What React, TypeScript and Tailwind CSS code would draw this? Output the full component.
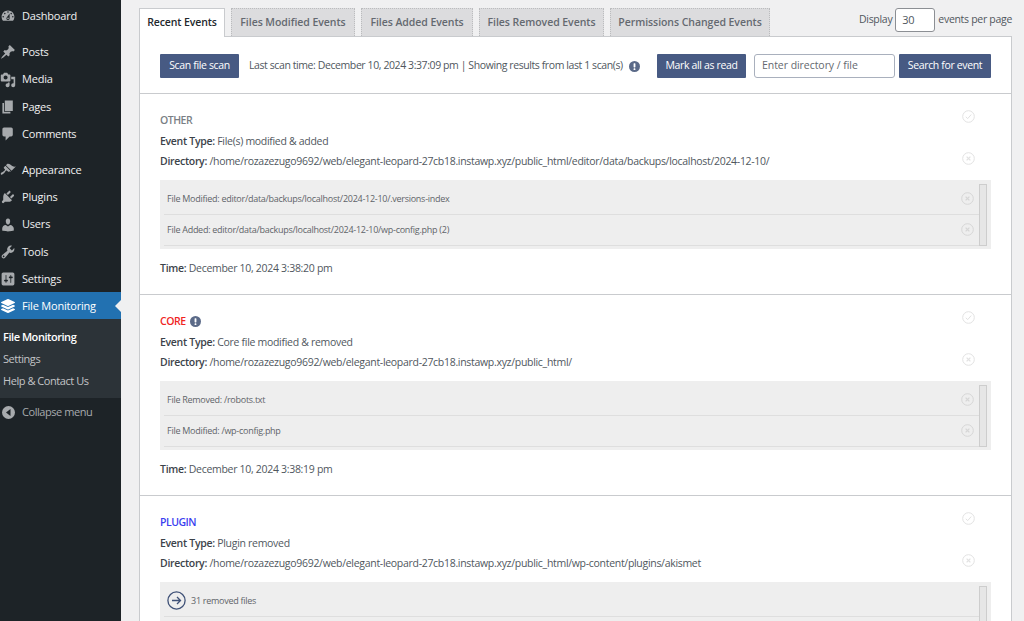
import React from "react";
import { FaLayerGroup } from "react-icons/fa";

const font = { fontFamily: '"Open Sans", "Noto Sans", sans-serif' };

type NavItem = { label: string; d: string; gap?: string };
const nav: NavItem[] = [
  { label: "Dashboard", d: "M3.76 16h12.48c1.1-1.37 1.76-3.11 1.76-5 0-4.42-3.58-8-8-8s-8 3.58-8 8c0 1.89.66 3.63 1.76 5zM10 4c.55 0 1 .45 1 1s-.45 1-1 1-1-.45-1-1 .45-1 1-1zM6 6c.55 0 1 .45 1 1s-.45 1-1 1-1-.45-1-1 .45-1 1-1zm8 0c.55 0 1 .45 1 1s-.45 1-1 1-1-.45-1-1 .45-1 1-1zm-5.37 5.55L12 7v6c0 1.1-.9 2-2 2s-2-.9-2-2c0-.57.24-1.08.63-1.45zM4 10c.55 0 1 .45 1 1s-.45 1-1 1-1-.45-1-1 .45-1 1-1zm12 0c.55 0 1 .45 1 1s-.45 1-1 1-1-.45-1-1 .45-1 1-1zm-5 3c0-.55-.45-1-1-1s-1 .45-1 1 .45 1 1 1 1-.45 1-1z" },
  { label: "Posts", gap: "mt-[8.6px]", d: "M10.44 3.02l1.82-1.82 6.36 6.35-1.83 1.82c-1.05-.68-2.48-.57-3.41.36l-.75.75c-.92.93-1.04 2.35-.35 3.41l-1.83 1.82-2.41-2.41-2.8 2.79c-.42.42-3.38 2.71-3.8 2.29s1.86-3.39 2.28-3.81l2.79-2.79L4.1 9.36l1.83-1.82c1.05.69 2.48.57 3.4-.36l.75-.75c.93-.92 1.05-2.35.36-3.41z" },
  { label: "Media", d: "M13 11V4c0-.55-.45-1-1-1h-1.67L9 1H5L3.67 3H2c-.55 0-1 .45-1 1v7c0 .55.45 1 1 1h10c.55 0 1-.45 1-1zM7 4.5c1.38 0 2.5 1.12 2.5 2.5S8.38 9.5 7 9.5 4.5 8.38 4.5 7 5.62 4.5 7 4.5zM14 6h5v10.5c0 1.38-1.12 2.5-2.5 2.5S14 17.88 14 16.5s1.12-2.5 2.5-2.5c.17 0 .34.02.5.05V9h-3V6zm-4 8.05V13h2v3.5c0 1.38-1.12 2.5-2.5 2.5S7 17.88 7 16.5 8.12 14 9.5 14c.17 0 .34.02.5.05z" },
  { label: "Pages", d: "M6 15V2h10v13H6zm-1 1h8v2H3V5h2v11z" },
  { label: "Comments", d: "M5 2h9c1.1 0 2 .9 2 2v7c0 1.1-.9 2-2 2h-2l-5 5v-5H5c-1.1 0-2-.9-2-2V4c0-1.1.9-2 2-2z" },
  { label: "Appearance", gap: "mt-[8.6px]", d: "M14.48 11.06L7.41 3.99l1.5-1.5c.5-.56 2.3-.47 3.51.32 1.21.8 1.43 1.28 2.91 2.1 1.18.64 2.45 1.26 4.45.85zm-.71.71L6.7 4.7 4.93 6.47c-.39.39-.39 1.02 0 1.41l1.06 1.06c.39.39.39 1.03 0 1.42-.6.6-1.43 1.11-2.21 1.69-.35.26-.7.53-1.01.84C1.43 13.23.4 14.79 1.2 15.6c.8.8 2.36-.23 3.7-1.57.31-.31.58-.66.85-1.02.57-.78 1.09-1.61 1.69-2.21.39-.39 1.02-.39 1.41 0l1.06 1.06c.39.39 1.02.39 1.41 0z" },
  { label: "Plugins", d: "M13.11 4.36L9.87 7.6 8 5.73l3.24-3.24c.35-.34 1.05-.2 1.56.32.52.51.66 1.21.31 1.55zm-8 1.77l.91-1.12 9.01 9.01-1.19.84c-.71.71-2.63 1.16-3.82 1.16H6.14L4.9 17.26c-.59.59-1.54.59-2.12 0-.59-.58-.59-1.53 0-2.12l1.24-1.24v-3.88c0-1.13.4-3.19 1.09-3.89zm7.26 3.97l3.24-3.24c.34-.35 1.04-.21 1.55.31.52.51.66 1.21.31 1.55l-3.24 3.25z" },
  { label: "Users", d: "M10 9.25c-2.27 0-2.73-3.44-2.73-3.44C7 4.02 7.82 2 9.97 2c2.16 0 2.98 2.02 2.71 3.81 0 0-.41 3.44-2.68 3.44zm0 2.57L12.72 10c2.39 0 4.52 2.33 4.52 4.53v2.49s-3.65 1.13-7.24 1.13c-3.65 0-7.24-1.13-7.24-1.13v-2.49c0-2.25 1.94-4.48 4.47-4.48z" },
  { label: "Tools", d: "M16.68 9.77c-1.34 1.34-3.3 1.67-4.95.99l-5.41 6.52c-.99.99-2.59.99-3.58 0s-.99-2.59 0-3.57l6.52-5.42c-.68-1.65-.35-3.61.99-4.95 1.28-1.28 3.12-1.62 4.72-1.06l-2.89 2.89 2.82 2.82 2.86-2.87c.53 1.58.18 3.39-1.08 4.65zM3.81 16.21c.4.39 1.04.39 1.43 0 .4-.4.4-1.04 0-1.43-.39-.4-1.03-.4-1.43 0-.39.39-.39 1.03 0 1.43z" },
  { label: "Settings", d: "M18 16V4c0-1.1-.9-2-2-2H4c-1.1 0-2 .9-2 2v12c0 1.1.9 2 2 2h12c1.1 0 2-.9 2-2zM8 11h1c.55 0 1 .45 1 1s-.45 1-1 1H8v1.5c0 .28-.22.5-.5.5s-.5-.22-.5-.5V13H6c-.55 0-1-.45-1-1s.45-1 1-1h1V5.5c0-.28.22-.5.5-.5s.5.22.5.5V11zm5-2h-1c-.55 0-1-.45-1-1s.45-1 1-1h1V5.5c0-.28.22-.5.5-.5s.5.22.5.5V7h1c.55 0 1 .45 1 1s-.45 1-1 1h-1v5.5c0 .28-.22.5-.5.5s-.5-.22-.5-.5V9z" },
];

function Sidebar() {
  return (
    <aside className="w-[121px] shrink-0 bg-[#1d2327] text-[11px] tracking-[-0.2px] text-[#f0f0f1]">
      <ul className="pt-[2.7px]">
        {nav.map(({ label, d, gap }) => (
          <li key={label} className={`flex h-[27.3px] items-center ${gap ?? ""}`}>
            <span className="flex w-[22px] justify-center pr-[6px]">
              <svg width="16" height="16" viewBox="0 0 20 20" fill="#a7aaad"><path d={d} /></svg>
            </span>
            <span>{label}</span>
          </li>
        ))}
        <li className="relative -mt-[0.6px] flex h-[27px] items-center bg-[#2271b1] text-white">
          <span className="flex w-[22px] justify-center pr-[7px]">
            <FaLayerGroup size={14} />
          </span>
          <span>File Monitoring</span>
          <span className="absolute right-0 top-[8px] h-0 w-0 border-y-[6px] border-r-[6px] border-y-transparent border-r-[#f0f0f1]" />
        </li>
      </ul>
      <ul className="flex h-[79px] flex-col justify-center gap-[5.5px] bg-[#2c3338] pl-[3px] tracking-[-0.45px] text-[#c3c4c7]">
        <li className="font-semibold text-white">File Monitoring</li>
        <li>Settings</li>
        <li>Help &amp; Contact Us</li>
      </ul>
      <div className="mt-[2px] flex h-[24px] items-center tracking-[-0.45px] text-[#a7aaad]">
        <span className="flex w-[22px] justify-center pr-[6px]">
          <svg width="13" height="13" viewBox="0 0 13 13">
            <circle cx="6.5" cy="6.5" r="6.5" fill="#a7aaad" />
            <path d="M8.5 3 L4 6.5 L8.5 10 Z" fill="#1d2327" />
          </svg>
        </span>
        <span>Collapse menu</span>
      </div>
    </aside>
  );
}

const Btn = ({ children, className = "" }: { children: React.ReactNode; className?: string }) => (
  <button className={`flex h-[24px] items-center justify-center rounded-[1px] bg-[#475a83] text-[10.5px] tracking-[-0.35px] text-white ${className}`}>
    {children}
  </button>
);

function Info({ size = 11 }: { size?: number }) {
  return (
    <svg width={size} height={size} viewBox="0 0 12 12" className="shrink-0">
      <circle cx="6" cy="6" r="6" fill="#5b6a88" />
      <rect x="5" y="2.4" width="2" height="4.6" rx="0.6" fill="#fff" />
      <rect x="5" y="8" width="2" height="1.8" rx="0.6" fill="#fff" />
    </svg>
  );
}

function CircleMark({ kind, box = false }: { kind: "check" | "x"; box?: boolean }) {
  const c = box ? "#d6d6d6" : "#e2e2e2";
  return (
    <svg width="13" height="13" viewBox="0 0 13 13">
      <circle cx="6.5" cy="6.5" r="5.8" fill="none" stroke={c} strokeWidth="1" />
      {kind === "check" ? (
        <path d="M3.8 6.8 L5.7 8.6 L9.2 4.6" fill="none" stroke={c} strokeWidth="1" />
      ) : (
        <path d="M4.6 4.6 L8.4 8.4 M8.4 4.6 L4.6 8.4" fill="none" stroke={c} strokeWidth="1.3" />
      )}
    </svg>
  );
}

type EventData = {
  title: string;
  titleClass: string;
  info?: boolean;
  type: string;
  dir: string;
  files?: string[];
  removed?: string;
  time?: string;
};

const events: EventData[] = [
  {
    title: "OTHER",
    titleClass: "text-[#7a7f85]",
    type: "File(s) modified & added",
    dir: "/home/rozazezugo9692/web/elegant-leopard-27cb18.instawp.xyz/public_html/editor/data/backups/localhost/2024-12-10/",
    files: ["File Modified: editor/data/backups/localhost/2024-12-10/.versions-index", "File Added: editor/data/backups/localhost/2024-12-10/wp-config.php (2)"],
    time: "December 10, 2024 3:38:20 pm",
  },
  {
    title: "CORE",
    titleClass: "text-[#f0261f]",
    info: true,
    type: "Core file modified & removed",
    dir: "/home/rozazezugo9692/web/elegant-leopard-27cb18.instawp.xyz/public_html/",
    files: ["File Removed: /robots.txt", "File Modified: /wp-config.php"],
    time: "December 10, 2024 3:38:19 pm",
  },
  {
    title: "PLUGIN",
    titleClass: "text-[#3a3ff0]",
    type: "Plugin removed",
    dir: "/home/rozazezugo9692/web/elegant-leopard-27cb18.instawp.xyz/public_html/wp-content/plugins/akismet",
    removed: "31 removed files",
  },
];

function EventCard({ e }: { e: EventData }) {
  return (
    <section className="relative h-[201px] shrink-0 border-b border-[#c9cbce] pl-[20px] pt-[17px] text-[10.5px] tracking-[-0.3px] text-[#50575e]">
      <div className="flex h-[19.5px] items-center gap-[4px]">
        <span className={`font-semibold tracking-[-0.5px] ${e.titleClass}`}>{e.title}</span>
        {e.info && <Info />}
      </div>
      <div className="h-[20.5px] leading-[20.5px]"><b className="font-semibold text-[#3c434a]">Event Type:</b> {e.type}</div>
      <div className="h-[20.5px] leading-[20.5px]"><b className="font-semibold text-[#3c434a]">Directory:</b> {e.dir}</div>
      <span className="absolute left-[822px] top-[16px] flex"><CircleMark kind="check" /></span>
      <span className="absolute left-[822px] top-[58px] flex"><CircleMark kind="x" /></span>
      <div className="mt-[8px] flex h-[69px] w-[831px] bg-[#eeeeee] pl-[4px] pr-[4px] pt-[4px]">
        <div className="min-w-0 flex-1 text-[9px] tracking-[-0.27px] text-[#5f6469]">
          {e.files?.map((f) => (
            <div key={f} className="flex h-[31px] items-center justify-between border-b border-[#dedede] pl-[3px] pr-[5px]">
              <span>{f}</span>
              <CircleMark kind="x" box />
            </div>
          ))}
          {e.removed && (
            <div className="flex h-[31px] items-center gap-[5px] border-b border-[#dedede] pl-[3px]">
              <svg width="19" height="19" viewBox="0 0 19 19" className="shrink-0">
                <circle cx="9.5" cy="9.5" r="8.6" fill="none" stroke="#3f5177" strokeWidth="1.3" />
                <path d="M5 9.5 H13.5 M10 6 L13.5 9.5 L10 13" fill="none" stroke="#3f5177" strokeWidth="1.3" />
              </svg>
              <span>{e.removed}</span>
            </div>
          )}
        </div>
        <div className="h-[62px] w-[8px] shrink-0 border border-[#cdcdcd] bg-[#e6e6e6]" />
      </div>
      {e.time && (
        <div className="mt-[9px] h-[20.5px] leading-[20.5px]"><b className="font-semibold text-[#3c434a]">Time:</b> {e.time}</div>
      )}
    </section>
  );
}

const tabs = ["Files Modified Events", "Files Added Events", "Files Removed Events", "Permissions Changed Events"];
const tabWidths = ["w-[124px]", "w-[112px]", "w-[125px]", "w-[160px]"];

export default function App() {
  return (
    <div className="flex h-[621px] w-[1024px] overflow-hidden bg-[#f0f0f1]" style={font}>
      <Sidebar />
      <main className="flex min-w-0 flex-1 flex-col pl-[18px] pr-[12px] pt-[8px]">
        <div className="flex h-[28px] shrink-0 items-end">
          <div className="z-10 -mb-px flex h-[29px] w-[86px] items-center justify-center border border-b-0 border-[#c9cbce] bg-white text-[10.5px] font-semibold tracking-[-0.1px] text-[#23282d]">
            Recent Events
          </div>
          {tabs.map((t, i) => (
            <div key={t} className={`ml-[6px] flex h-[28px] items-center justify-center border border-b-0 border-dotted border-[#bbbcbe] bg-[#dcdcde] text-[10.5px] font-semibold tracking-[-0.05px] text-[#646970] ${tabWidths[i]}`}>
              {t}
            </div>
          ))}
          <div className="mb-[4px] ml-auto flex items-center gap-[3px] text-[10.5px] tracking-[-0.3px] text-[#50575e]">
            <span>Display</span>
            <span className="flex h-[24px] w-[40px] items-center rounded-[3px] border border-[#8c8f94] bg-white pl-[6px] text-[11px]">30</span>
            <span>events per page</span>
          </div>
        </div>
        <div className="flex min-h-0 flex-1 flex-col overflow-hidden border-x border-t border-[#c9cbce] bg-white">
          <div className="flex h-[57px] shrink-0 items-center border-b border-[#c9cbce] pl-[20px] pr-[20px] pt-[2px] text-[10.5px] tracking-[-0.41px] text-[#50575e]">
            <Btn className="w-[79px]">Scan file scan</Btn>
            <span className="ml-[10px] whitespace-nowrap">Last scan time: December 10, 2024 3:37:09 pm | Showing results from last 1 scan(s)</span>
            <span className="ml-[6px] flex"><Info /></span>
            <div className="ml-auto flex items-center">
              <Btn className="w-[89px]">Mark all as read</Btn>
              <span className="ml-[8px] flex h-[24px] w-[141px] items-center rounded-[3px] border border-[#a9b0bd] bg-white pl-[7px] tracking-[-0.05px] text-[#646970]">Enter directory / file</span>
              <Btn className="ml-[4px] w-[92px]">Search for event</Btn>
            </div>
          </div>
          {events.map((e) => <EventCard key={e.title} e={e} />)}
        </div>
      </main>
    </div>
  );
}
